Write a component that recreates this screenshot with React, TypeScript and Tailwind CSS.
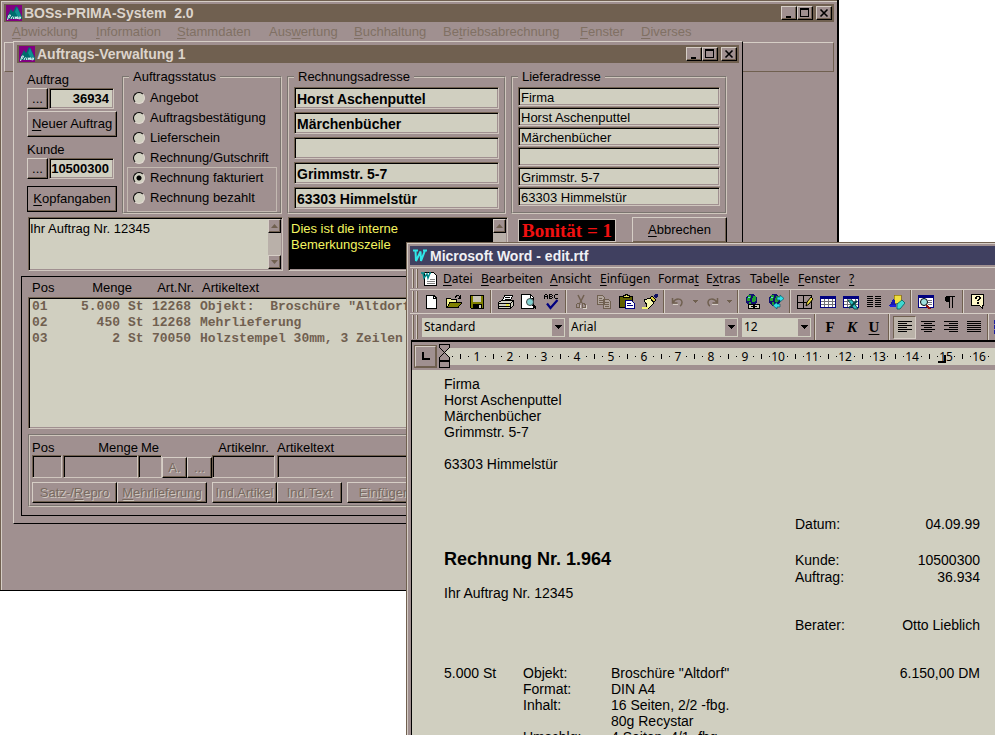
import type { ReactNode } from "react";

const SANS = "font-['Liberation_Sans',Arial,sans-serif]";
const UI = "font-['Noto_Sans',Tahoma,sans-serif]";

const RAISED =
  "border border-t-[#d6cec6] border-l-[#d6cec6] border-b-black border-r-black bg-[#a09090] shadow-[inset_-1px_-1px_0_#706050]";
const SUNKEN =
  "border border-t-[#706050] border-l-[#706050] border-b-[#cfc6be] border-r-[#cfc6be] shadow-[inset_1px_1px_0_#000,inset_-1px_-1px_0_#a09090]";
const GROOVE = "border-2 border-[#cfc6bc] [border-style:groove]";
const EMBOSS = "text-[#786a60] [text-shadow:1px_1px_0_#d0c8c0]";

/* Label text with its keyboard mnemonic underlined */
function Mn({ t, i = 0 }: { t: string; i?: number }) {
  return (
    <span className="whitespace-pre">
      {t.slice(0, i)}
      <span className="underline underline-offset-2">{t[i]}</span>
      {t.slice(i + 1)}
    </span>
  );
}

function PrimaLogo() {
  return (
    <svg width="16" height="16" viewBox="0 0 16 16" className="shrink-0" aria-hidden="true">
      <rect width="16" height="16" fill="#800080" />
      <path d="M1 12 5 4l2 3 3-6 2 2 4 9v2H1z" fill="#006c6c" />
      <path d="M9 7l2-5 4 9-3 1z" fill="#109090" />
      <path d="M1.500 15l1.500-5h1.500l-1 2.500H3M5 14l.8-2 1-.4M8 11.600 7.300 14M9 14l.7-2.200.9.200-.6 2M11 12l.9-.2-.6 2.200M14.500 12h-1.300l-.6 1.800h1.600l.6-2" fill="none" stroke="#f0ffff" strokeWidth=".9" />
    </svg>
  );
}

function WindowButtons() {
  const b = `${RAISED} flex h-[14px] w-4 items-center justify-center`;
  return (
    <div className="ml-auto flex items-center">
      <button className={b} aria-label="Minimieren">
        <svg width="10" height="10" viewBox="0 0 10 10" shapeRendering="crispEdges"><path d="M2 8h5v2H2z" /></svg>
      </button>
      <button className={b} aria-label="Maximieren">
        <svg width="10" height="10" viewBox="0 0 10 10" shapeRendering="crispEdges"><path d="M0 0h9v9H0zM1 2v6h7V2z" fillRule="evenodd" /></svg>
      </button>
      <button className={`${b} ml-[3px]`} aria-label="Schließen">
        <svg width="10" height="10" viewBox="0 0 10 10"><path d="M1.500 1.500l7 7M8.500 1.500l-7 7" stroke="#000" strokeWidth="1.600" /></svg>
      </button>
    </div>
  );
}

function ScrollBar() {
  const b = `${RAISED} flex h-[14px] w-[13px] shrink-0 items-center justify-center`;
  return (
    <div className="my-px mr-px flex w-[13px] shrink-0 flex-col justify-between bg-[#b9b0a9]">
      <button className={b} aria-label="Nach oben">
        <svg width="7" height="4" viewBox="0 0 7 4"><path d="M0 4 3.500 0 7 4z" fill="#706050" /></svg>
      </button>
      <button className={b} aria-label="Nach unten">
        <svg width="7" height="4" viewBox="0 0 7 4"><path d="M0 0h7L3.500 4z" fill="#706050" /></svg>
      </button>
    </div>
  );
}

function Status({ label, checked = false }: { label: string; checked?: boolean }) {
  return (
    <label className="flex h-5 items-center gap-[5px] pl-[5px]">
      <input
        type="radio"
        name="status"
        defaultChecked={checked}
        className="h-3 w-3 shrink-0 appearance-none rounded-full border border-t-black border-l-black border-b-[#e0d8d0] border-r-[#e0d8d0] bg-[#d0cfc0] checked:bg-[radial-gradient(circle,#000_2px,#d0cfc0_3px)]"
      />
      <span className="whitespace-nowrap">{label}</span>
    </label>
  );
}

function NumberPick({ id, label, value }: { id: string; label: string; value: string }) {
  return (
    <div>
      <label htmlFor={id} className="block h-4 leading-[15px]">{label}</label>
      <div className="flex h-[21px] gap-px">
        <button className={`${RAISED} w-[21px] leading-[14px]`}>...</button>
        <input id={id} defaultValue={value} className={`${SUNKEN} w-[65px] bg-[#d0cfc0] pr-1 text-right font-bold`} />
      </div>
    </div>
  );
}

function AddressBox({ title, lines, big = false }: { title: string; lines: string[]; big?: boolean }) {
  return (
    <fieldset className={`${GROOVE} h-[145px] px-[5px] ${big ? "w-[219px]" : "w-[216px]"}`}>
      <legend className="px-1 leading-4">{title}</legend>
      <div className={`flex flex-col pt-[2px] ${big ? "gap-[3px]" : "gap-px"}`}>
        {lines.map((l, n) => (
          <input
            key={n}
            aria-label={`${title} Zeile ${n + 1}`}
            defaultValue={l}
            className={`${SUNKEN} w-full bg-[#d0cfc0] pt-px pl-[2px] ${big ? "h-[22px] text-[14px] font-bold" : "h-[19px]"}`}
          />
        ))}
      </div>
    </fieldset>
  );
}

const positions = [
  ["01", "5.000", "St", "12268", 'Objekt:  Broschüre "Altdorf"'],
  ["02", "450", "St", "12268", "Mehrlieferung"],
  ["03", "2", "St", "70050", "Holzstempel 30mm, 3 Zeilen"],
];

function EntryField({ label, width, align = "" }: { label: string; width: string; align?: string }) {
  return (
    <label className={`flex flex-col ${width} ${align}`}>
      <span className="h-[15px] leading-[15px] whitespace-nowrap">{label}</span>
      <input className={`${SUNKEN} h-[23px] w-full bg-[#a09090]`} />
    </label>
  );
}

function OrderWindow() {
  const disabled = `${RAISED} ${EMBOSS} h-[21px] whitespace-nowrap`;
  return (
    <section className="absolute top-[41px] left-[13px] flex h-[483px] w-[730px] flex-col border border-t-[#d6cec6] border-r-black border-b-black border-l-[#d6cec6] bg-[#a09090] p-[3px]">
      <header className="flex h-[18px] shrink-0 items-center gap-[2px] bg-[#706050] pr-[2px] pl-[2px] text-[14px] font-bold text-[#dcd4cc]">
        <PrimaLogo />
        <h2>Auftrags-Verwaltung 1</h2>
        <WindowButtons />
      </header>

      <div className="flex gap-[5px] pt-[6px] pl-[10px]">
        <div className="flex w-[90px] flex-col pt-[3px]">
          <NumberPick id="auftrag" label="Auftrag" value="36934" />
          <button className={`${RAISED} mt-[2px] h-[26px] whitespace-nowrap`}><Mn t="Neuer Auftrag" /></button>
          <div className="mt-[5px]"><NumberPick id="kunde" label="Kunde" value="10500300" /></div>
          <button className={`${RAISED} mt-[7px] h-[26px] whitespace-nowrap outline-1 -outline-offset-1 outline-black`}>
            <Mn t="Kopfangaben" />
          </button>
        </div>
        <fieldset className={`${GROOVE} h-[145px] w-[160px] px-1`}>
          <legend className="ml-px px-1 leading-4">Auftragsstatus</legend>
          <div className="pt-[3px]">
            <Status label="Angebot" />
            <Status label="Auftragsbestätigung" />
            <Status label="Lieferschein" />
            <Status label="Rechnung/Gutschrift" />
            <div className="pb-[3px] ring-1 ring-[#c4bab2]">
              <Status label="Rechnung fakturiert" checked />
              <Status label="Rechnung bezahlt" />
            </div>
          </div>
        </fieldset>
        <AddressBox
          big
          title="Rechnungsadresse"
          lines={["Horst Aschenputtel", "Märchenbücher", "", "Grimmstr. 5-7", "63303 Himmelstür"]}
        />
        <AddressBox
          title="Lieferadresse"
          lines={["Firma", "Horst Aschenputtel", "Märchenbücher", "", "Grimmstr. 5-7", "63303 Himmelstür"]}
        />
      </div>

      <div className="flex gap-[5px] pt-[3px] pl-[11px]">
        <div className={`${SUNKEN} flex h-[54px] w-[255px] bg-[#d0cfc0]`}>
          <textarea aria-label="Auftragstext" defaultValue="Ihr Auftrag Nr. 12345" className="min-w-0 flex-1 resize-none pt-[3px] pl-px leading-4 outline-none" />
          <ScrollBar />
        </div>
        <div className={`${SUNKEN} flex h-[54px] w-[220px] bg-black`}>
          <textarea
            aria-label="Interne Bemerkung"
            defaultValue={"Dies ist die interne\nBemerkungszeile"}
            className="min-w-0 flex-1 resize-none overflow-hidden pt-[3px] pl-[2px] leading-4 text-[#f4f460] outline-none"
          />
          <ScrollBar />
        </div>
        <output className="mt-[2px] ml-[5px] h-[23px] w-[98px] overflow-hidden border border-[#cfc6be] bg-black text-center font-['Liberation_Serif','Times_New_Roman',serif] text-[19px] leading-[22px] font-bold whitespace-nowrap text-[#f01010]">
          Bonität = 1
        </output>
        <button className={`${RAISED} ml-[11px] h-[26px] w-[95px]`}><Mn t="Abbrechen" /></button>
      </div>

      <div className="mx-1 mt-[5px] mb-1 flex-1 border border-black px-[6px] pt-[3px]">
        <table className="block">
          <thead className="block">
            <tr className="grid h-[17px] grid-cols-[50px_50px_62px_1fr] pl-1 leading-4">
              <th className="text-left font-normal">Pos</th>
              <th className="text-right font-normal">Menge</th>
              <th className="text-right font-normal">Art.Nr.</th>
              <th className="pl-2 text-left font-normal">Artikeltext</th>
            </tr>
          </thead>
          <tbody className={`${SUNKEN} block h-[132px] bg-[#d0cfc0] pt-px font-['Liberation_Mono','Courier_New',monospace] font-bold text-[#706050]`}>
            {positions.map((p) => (
              <tr key={p[0]} className="grid h-4 grid-cols-[48px_40px_32px_48px_1fr] pl-[3px] leading-4 whitespace-pre">
                <td>{p[0]}</td>
                <td className="text-right">{p[1]}</td>
                <td className="pl-2">{p[2]}</td>
                <td>{p[3]}</td>
                <td>{p[4]}</td>
              </tr>
            ))}
          </tbody>
        </table>
        <div className={`${GROOVE} mt-[5px] h-[73px] px-[2px] pt-1`}>
          <div className="flex items-end">
            <EntryField label="Pos" width="w-[30px]" />
            <EntryField label="Menge" width="ml-px w-[75px]" align="text-right" />
            <EntryField label="Me" width="w-[24px]" align="text-center" />
            <button disabled className={`${disabled} w-[25px]`}>A.</button>
            <button disabled className={`${disabled} w-[25px]`}>...</button>
            <EntryField label="Artikelnr." width="w-[63px]" align="text-center" />
            <EntryField label="Artikeltext" width="ml-[2px] flex-1" />
          </div>
          <div className="mt-1 flex">
            <button disabled className={`${disabled} w-[85px]`}><Mn t="Satz-/Repro" i={6} /></button>
            <button disabled className={`${disabled} w-[90px]`}><Mn t="Mehrlieferung" /></button>
            <button disabled className={`${disabled} ml-[5px] w-[65px]`}>Ind.Artikel</button>
            <button disabled className={`${disabled} w-[65px]`}>Ind.Text</button>
            <button disabled className={`${disabled} ml-[5px] w-[75px]`}><Mn t="Einfügen" i={3} /></button>
          </div>
        </div>
      </div>
    </section>
  );
}

function MainWindow() {
  return (
    <main className="absolute top-0 left-0 flex h-[591px] w-[839px] flex-col border-r-2 border-b border-r-black border-b-black bg-[#a09090] p-1 pr-[3px] shadow-[inset_1px_1px_0_#706050,inset_2px_2px_0_#d6cec6]">
      <header className="flex h-[18px] shrink-0 items-center gap-[2px] bg-[#706050] pr-[2px] pl-[2px] text-[14px] font-bold text-[#dcd4cc]">
        <PrimaLogo />
        <h1 className="whitespace-pre">BOSs-PRIMA-System  2.0</h1>
        <WindowButtons />
      </header>
      <nav className="grid h-[20px] grid-cols-[84px_81px_92px_85px_89px_137px_61px_60px] items-center pl-2 text-[#807064]">
        <button className="text-left"><Mn t="Abwicklung" /></button>
        <button className="text-left"><Mn t="Information" /></button>
        <button className="text-left"><Mn t="Stammdaten" /></button>
        <button className="text-left"><Mn t="Auswertung" i={3} /></button>
        <button className="text-left"><Mn t="Buchhaltung" /></button>
        <button className="text-left"><Mn t="Betriebsabrechnung" i={2} /></button>
        <button className="text-left"><Mn t="Fenster" /></button>
        <button className="text-left"><Mn t="Diverses" /></button>
      </nav>
      <div className="h-[30px] border border-t-[#d6cec6] border-r-[#706050] border-b-[#706050] border-l-[#d6cec6]" />
    </main>
  );
}

function Grip() {
  return (
    <span className="flex h-full w-[7px] shrink-0 gap-[2px] py-px">
      <span className="w-[2px] border-l border-l-[#d6cec6] bg-[#706050]" />
      <span className="w-[2px] border-l border-l-[#d6cec6] bg-[#706050]" />
    </span>
  );
}

function Sep({ width = "w-[6px]" }: { width?: string }) {
  return (
    <span className={`flex h-full shrink-0 justify-center ${width}`}>
      <span className="w-[2px] border-l border-l-[#706050] bg-[#d6cec6]" />
    </span>
  );
}

function Tool({ label, children, width = "w-[23px]" }: { label: string; children: ReactNode; width?: string }) {
  return (
    <button aria-label={label} className={`flex h-full shrink-0 items-center justify-center ${width}`}>
      <svg width="16" height="16" viewBox="0 0 16 16" shapeRendering="crispEdges" fill="none">
        {children}
      </svg>
    </button>
  );
}

function DropArrow({ label }: { label: string }) {
  return (
    <button aria-label={label} className="flex h-full w-3 shrink-0 items-center justify-center">
      <svg width="5" height="3" viewBox="0 0 5 3" shapeRendering="crispEdges"><path d="M0 0h5v1H4v1H3v1H2V2H1V1H0z" fill="#706050" /></svg>
    </button>
  );
}

const globe = (
  <>
    <circle cx="6.500" cy="6" r="6" fill="#101070" />
    <path d="M3 1h3v3H5v3H2V4h1zM8 2h3v4L9 8H7V6zM4 8h2v3H4z" fill="#20a030" />
    <path d="M3 3h2v1H3z" fill="#60e0e0" />
  </>
);
const grid = (
  <>
    <path d="M0 2h16v12H0z" fill="#fff" />
    <path d="M0 2h16v3H0z" fill="#000080" />
    <path d="M.5 4v9.500h15V4" stroke="#000080" />
    <path d="M1 7.500h14M1 10.500h14M4.500 5v8M8.500 5v8M12.500 5v8" stroke="#707078" />
  </>
);

function StandardBar() {
  return (
    <div className="flex h-[24px] shrink-0 items-center border-t border-t-[#d6cec6] pl-[2px]">
      <Grip />
      <Tool label="Neu">
        <path d="M3 1h8v1H4v12h9V4h1v11H3z" fill="#000" />
        <path d="M4 2h7v3h2v9H4z" fill="#fff" />
        <path d="M10 1h1l3 3v1h-4z" fill="#000" />
        <path d="M11 3h1v1h-1z" fill="#fff" />
      </Tool>
      <Tool label="Öffnen">
        <path d="M.5 13.500v-9h4l1 1h5v3" fill="#f4f490" stroke="#000" />
        <path d="M1 13.500l3-5h12l-4 5z" fill="#808000" stroke="#000" />
        <path d="M9 3.500c2-3 4-2 5 0M14.500 1v3h-3" stroke="#000" />
      </Tool>
      <Tool label="Speichern">
        <path d="M1.500 1.500h13v13h-12l-1-1z" fill="#808000" stroke="#000" />
        <path d="M4 2h8v6H4z" fill="#c8c4b8" />
        <path d="M4 10h9v5H4z" fill="#000" />
        <path d="M10 11h2v3h-2z" fill="#d0cfc0" />
      </Tool>
      <Sep />
      <Tool label="Drucken">
        <path d="M4.500 6.500l2-5h8l-2 5z" fill="#fff" stroke="#000" />
        <path d="M7 3.500h5M6.500 5.500h5" stroke="#000" />
        <path d="M.5 8.500l3-2h12v5l-3 3H.5z" fill="#d0cfc0" stroke="#000" />
        <path d="M1 9.500h12M1 12.500h12M13 9l2-2M12.500 9v5" stroke="#000" />
        <path d="M8 10h3v2H8z" fill="#e8e840" />
      </Tool>
      <Tool label="Seitenansicht">
        <path d="M.5.500h9l3 3v11H.5z" fill="#fff" stroke="#000" />
        <path d="M9.500 1v3h3" stroke="#000" />
        <circle cx="9" cy="8" r="3.500" fill="#80d0d0" stroke="#404848" shapeRendering="auto" />
        <path d="M12 11l3 3.500" stroke="#000" strokeWidth="2" />
      </Tool>
      <Tool label="Rechtschreibung">
        <path d="M1 0h2v1H1zM0 1h1v4H0zM3 1h1v4H3zM1 2h2v1H1zM5 0h1v5H5zM6 0h2v1H6zM6 2h2v1H6zM6 4h2v1H6zM8 1h1v1H8zM8 3h1v1H8zM11 0h3v1h-3zM10 1h1v3h-1zM11 4h3v1h-3z" fill="#000" />
        <path d="M3 9.500l3.500 4.500 7-8" stroke="#000080" strokeWidth="2.200" shapeRendering="auto" />
      </Tool>
      <Sep />
      <Tool label="Ausschneiden">
        <path d="M5 1l4 8M11 1L7 9" stroke="#706050" strokeWidth="1.500" shapeRendering="auto" />
        <path d="M4.500 9.500h2v4h-3v-3zM9.500 9.500h2l1 2v2h-3z" stroke="#706050" />
        <path d="M7.500 14v-3M13.500 11v3.500h-4" stroke="#d6cec6" />
      </Tool>
      <Tool label="Kopieren">
        <path d="M1.500 1.500h5l2 2v7h-7zM7.500 5.500h5l2 2v7h-7z" fill="#b0a49c" stroke="#706050" />
        <path d="M3 4.500h3M3 6.500h4M3 8.500h4M9 8.500h4M9 10.500h4M9 12.500h4" stroke="#706050" />
      </Tool>
      <Tool label="Einfügen">
        <path d="M.5 2.500h13v11H.5z" fill="#606000" stroke="#000" />
        <path d="M4 3.500h6v-2H8v-1H6v1H4z" fill="#e8e060" stroke="#000" />
        <path d="M6.500 6.500h6l3 3v5h-9z" fill="#fff" stroke="#000080" />
        <path d="M8 9.500h4M8 11.500h6" stroke="#000080" />
      </Tool>
      <Tool label="Format übertragen">
        <path d="M2 6l6-2 4 5-5 5H4l1-3z" fill="#f8f8b0" stroke="#000" />
        <path d="M8 4l2-2 4 4-2 2z" fill="#e0d040" stroke="#000" />
        <path d="M12.500 3.500L15.500.5" stroke="#101060" strokeWidth="3" />
        <path d="M0 14h6" stroke="#f4f470" strokeWidth="2" />
      </Tool>
      <Sep />
      <Tool label="Rückgängig" width="w-[22px]">
        <path d="M2.500 4v5h5M3 8.500c3-5 9-4 9 0 0 2-1 3-2 3.500" stroke="#706050" strokeWidth="1.500" shapeRendering="auto" />
        <path d="M3 10h5" stroke="#d6cec6" />
      </Tool>
      <DropArrow label="Rückgängig-Liste" />
      <Tool label="Wiederherstellen" width="w-[22px]">
        <path d="M13.500 4v5h-5M13 8.500c-3-5-9-4-9 0 0 2 1 3 2 3.500" stroke="#706050" strokeWidth="1.500" shapeRendering="auto" />
        <path d="M8 10h6" stroke="#d6cec6" />
      </Tool>
      <DropArrow label="Wiederherstellen-Liste" />
      <Sep />
      <Tool label="Hyperlink">
        {globe}
        <path d="M3 10.500h5v4H3zM9.500 10.500h5v4h-5zM6 12.500h6" stroke="#000" fill="#d0cfc0" />
      </Tool>
      <Tool label="Web">
        {globe}
        <path d="M9 3h3V1l4 3.500L12 8V6H9zM12 10H9V8l-4 3.500L9 15v-2h3z" fill="#30e0e8" stroke="#004858" strokeWidth=".6" shapeRendering="auto" />
      </Tool>
      <Sep />
      <Tool label="Tabellen und Rahmen">
        <path d="M.5 1.500h14v13H.5zM6.500 2v12M1 8.500h9" stroke="#000" />
        <path d="M9 12l1-4 4-5 2 2-4 5z" fill="#e8d840" stroke="#000" shapeRendering="auto" />
      </Tool>
      <Tool label="Tabelle">{grid}</Tool>
      <Tool label="Excel-Tabelle">
        {grid}
        <path d="M5 6h4l6 9h-4z" fill="#30c0c0" stroke="#003030" strokeWidth=".8" shapeRendering="auto" />
        <path d="M14 7l-8 7" stroke="#004848" strokeWidth="2" shapeRendering="auto" />
      </Tool>
      <Tool label="Spalten">
        <path d="M1 2.500h6M1 4.500h6M1 6.500h6M1 8.500h6M1 10.500h6M1 12.500h6M9 2.500h6M9 4.500h6M9 6.500h6M9 8.500h6M9 10.500h6M9 12.500h6" stroke="#000" />
      </Tool>
      <Tool label="Zeichnen">
        <path d="M5 1h7v8H5z" fill="#f0e040" stroke="#806000" strokeWidth=".6" />
        <path d="M0 12l5-8 2 8z" fill="#1818b0" />
        <path d="M1 11h6v2H1z" fill="#2020e0" />
        <path d="M8 10l5-4 3 3-5 6H8z" fill="#40d8d0" stroke="#006060" strokeWidth=".8" shapeRendering="auto" />
      </Tool>
      <Sep />
      <Tool label="Dokumentstruktur">
        <path d="M.5 1.500h15v12H.5z" fill="#fff" stroke="#000080" />
        <path d="M0 1h16v3H0z" fill="#000080" />
        <path d="M10 6.500h4M10 8.500h4M10 10.500h4" stroke="#707080" />
        <circle cx="6" cy="8" r="3.500" fill="#a0e0e0" stroke="#000" shapeRendering="auto" />
        <path d="M8.500 11l3.500 4" stroke="#901010" strokeWidth="2" />
      </Tool>
      <Tool label="Absatzmarken">
        <path d="M6 2h8v1h-2v11h-1V3H9v11H8V8H6L4 7V3z" fill="#000" />
      </Tool>
      <Sep />
      <Tool label="Hilfe">
        <path d="M1.500.500h12v11h-1v3l-3-3h-8z" fill="#fff8c8" stroke="#000" />
        <path d="M5 3h1V2h4v1h1v2h-1v1H9v1H7V6h1V5h1V3H7v2H5zM7 8h2v2H7z" fill="#000" />
      </Tool>
    </div>
  );
}

function Combo({ label, value, width }: { label: string; value: string; width: string }) {
  return (
    <label className={`relative block h-[19px] shrink-0 bg-[#d0cfc0] ${width}`}>
      <select aria-label={label} defaultValue={value} className="h-full w-full appearance-none pl-[2px] text-[12px] leading-[18px] outline-none">
        <option>{value}</option>
      </select>
      <span className="pointer-events-none absolute top-px right-px bottom-px flex w-3 items-center justify-center bg-[#a09090]">
        <svg width="7" height="4" viewBox="0 0 7 4" shapeRendering="crispEdges"><path d="M0 0h7v1H6v1H5v1H4v1H3V3H2V2H1V1H0z" /></svg>
      </span>
    </label>
  );
}

function FormatBar() {
  const letter = "w-[22px] shrink-0 font-['Liberation_Serif','Times_New_Roman',serif] text-[15px] leading-5 font-bold";
  return (
    <div className="flex h-[27px] shrink-0 items-center border-t border-t-[#d6cec6] pl-[2px]">
      <Grip />
      <div className="flex shrink-0 gap-1 pl-[3px]">
        <Combo label="Formatvorlage" value="Standard" width="w-[143px]" />
        <Combo label="Schriftart" value="Arial" width="w-[169px]" />
        <Combo label="Schriftgrad" value="12" width="w-[69px]" />
      </div>
      <Sep width="w-[8px]" />
      <button className={letter}>F</button>
      <button className={`${letter} italic`}>K</button>
      <button className={`${letter} underline underline-offset-2`}>U</button>
      <Sep width="w-[8px]" />
      <span className="flex h-[23px] shrink-0 border border-t-[#706050] border-r-[#d6cec6] border-b-[#d6cec6] border-l-[#706050] bg-[#bab2a8]">
        <Tool label="Linksbündig" width="w-[21px]">
          <path d="M1 2.500h14M1 4.500h9M1 6.500h14M1 8.500h9M1 10.500h14M1 12.500h9" stroke="#000" />
        </Tool>
      </span>
      <Tool label="Zentriert">
        <path d="M1 2.500h14M4 4.500h8M1 6.500h14M4 8.500h8M1 10.500h14M4 12.500h8" stroke="#000" />
      </Tool>
      <Tool label="Rechtsbündig">
        <path d="M1 2.500h14M6 4.500h9M1 6.500h14M6 8.500h9M1 10.500h14M6 12.500h9" stroke="#000" />
      </Tool>
      <Tool label="Blocksatz">
        <path d="M1 2.500h14M1 4.500h14M1 6.500h14M1 8.500h14M1 10.500h14M1 12.500h14" stroke="#000" />
      </Tool>
      <Sep width="w-[5px]" />
      <Tool label="Nummerierung">
        <path d="M0 1h2v4H0zM0 6h2v4H0zM0 11h2v4H0z" fill="#2020a0" />
        <path d="M5 3.500h10M5 8.500h10M5 13.500h10" stroke="#000" />
      </Tool>
    </div>
  );
}

function Ruler() {
  const cms = Array.from({ length: 17 }, (_, n) => n + 1);
  return (
    <div className="flex h-[28px] shrink-0 items-center overflow-hidden pl-[3px]">
      <button aria-label="Tabstopp" className="mr-px flex h-[21px] w-[21px] shrink-0 items-center justify-center border border-t-[#d6cec6] border-r-[#706050] border-b-[#706050] border-l-[#d6cec6] shadow-[0_0_0_1px_#706050]">
        <svg width="8" height="8" viewBox="0 0 8 8"><path d="M0 0h2v6h6v2H0z" /></svg>
      </button>
      <svg width="580" height="28" viewBox="0 0 580 28" className="shrink-0" shapeRendering="crispEdges">
        <rect x="7" y="6" width="573" height="17" fill="#d0cfc0" />
        {cms.map((n) => {
          const x = Math.round(n * 33.5) + 6;
          return (
            <g key={n}>
              <path d={`M${x - 25} 14h1v1h-1zM${x - 17} 12h1v5h-1zM${x - 9} 14h1v1h-1z`} />
              {n < 17 && <text x={x} y="19" textAnchor="middle" fontSize="12">{n}</text>}
            </g>
          );
        })}
        <path d="M2.500 2.500h10v3l-5 5-5-5zM7.500 10.500l5 5v3h-10v-3zM2.500 19.500h10v6h-10z" fill="#a09090" stroke="#000" />
        <path d="M507 13h2v8h-8v-2h6z" />
      </svg>
    </div>
  );
}

function Page() {
  return (
    <article className={`${SANS} min-h-0 flex-1 overflow-hidden bg-[#d0cfc0] pt-[6px] pr-[15px] pl-[32px] text-[14px] leading-4`}>
      <address className="not-italic">
        Firma<br />
        Horst Aschenputtel<br />
        Märchenbücher<br />
        Grimmstr. 5-7<br />
        <br />
        63303 Himmelstür
      </address>
      <div className="mt-11 flex justify-between">
        <div className="pt-[33px]">
          <h2 className="text-[18px] leading-5 font-bold">Rechnung Nr. 1.964</h2>
          <p className="mt-4">Ihr Auftrag Nr. 12345</p>
        </div>
        <dl className="grid w-[185px] grid-cols-2 [&>dd]:text-right [&>dd]:whitespace-nowrap">
          <dt className="mb-5">Datum:</dt>
          <dd className="mb-5">04.09.99</dd>
          <dt>Kunde:</dt>
          <dd>10500300</dd>
          <dt className="mt-px">Auftrag:</dt>
          <dd className="mt-px">36.934</dd>
          <dt className="mt-8">Berater:</dt>
          <dd className="mt-8">Otto Lieblich</dd>
        </dl>
      </div>
      <table className="mt-8 w-full table-fixed">
        <colgroup>
          <col className="w-[79px]" />
          <col className="w-[88px]" />
          <col />
          <col className="w-[120px]" />
        </colgroup>
        <tbody>
          <tr><td>5.000 St</td><td>Objekt:</td><td>Broschüre "Altdorf"</td><td className="text-right">6.150,00 DM</td></tr>
          <tr><td /><td>Format:</td><td>DIN A4</td><td /></tr>
          <tr><td /><td>Inhalt:</td><td>16 Seiten, 2/2 -fbg.</td><td /></tr>
          <tr><td /><td /><td>80g Recystar</td><td /></tr>
          <tr><td /><td>Umschlg:</td><td>4 Seiten, 4/1 -fbg.</td><td /></tr>
        </tbody>
      </table>
    </article>
  );
}

function WordWindow() {
  return (
    <section className={`${UI} absolute top-[242px] right-0 bottom-0 left-[406px] flex flex-col overflow-hidden border-t border-l border-[#706050] bg-[#a09090] pt-[3px] pl-[3px] text-[12px] shadow-[inset_1px_1px_0_#d6cec6]`}>
      <header className={`${SANS} flex h-[19px] shrink-0 items-center gap-[3px] bg-[#404060] pl-[2px] text-[14px] font-bold text-[#f0f0f4]`}>
        <svg width="15" height="14" viewBox="0 0 15 14" aria-hidden="true">
          <path d="M1 1.500h5M3.500 1.500 4 12l4.500-9.500L9 12l4-10.500M11 1.500h4" fill="none" stroke="#30e8e8" strokeWidth="2" />
        </svg>
        <h1>Microsoft Word - edit.rtf</h1>
      </header>
      <nav className="mt-[2px] flex h-[22px] shrink-0 items-center border-t border-t-[#d6cec6] pl-[2px]">
        <Grip />
        <svg width="17" height="16" viewBox="0 0 17 16" shapeRendering="crispEdges" className="mr-[5px] ml-[2px] shrink-0" aria-hidden="true">
          <path d="M3.500 1.500h9l3 3v10h-12z" fill="#fff" stroke="#000" />
          <path d="M9 8.500h5M6 10.500h8M6 12.500h8" stroke="#808080" />
          <path d="M0 2h4M2 2l1 5 3-4 1 4 2-5M8 2h2" fill="none" stroke="#008888" strokeWidth="1.500" shapeRendering="auto" />
        </svg>
        <div className="grid grid-cols-[38px_69px_50px_58px_48px_44px_48px_51px_20px] [&>button]:text-left">
          <button><Mn t="Datei" /></button>
          <button><Mn t="Bearbeiten" /></button>
          <button><Mn t="Ansicht" /></button>
          <button><Mn t="Einfügen" /></button>
          <button><Mn t="Format" i={5} /></button>
          <button><Mn t="Extras" i={1} /></button>
          <button><Mn t="Tabelle" i={5} /></button>
          <button><Mn t="Fenster" /></button>
          <button><Mn t="?" /></button>
        </div>
      </nav>
      <StandardBar />
      <FormatBar />
      <div className="ml-px flex min-h-0 flex-1 flex-col border-t-2 border-l border-black">
        <Ruler />
        <Page />
      </div>
    </section>
  );
}

export default function App() {
  return (
    <div className={`${SANS} relative h-screen overflow-hidden bg-white text-[13px] leading-4 text-black`}>
      <MainWindow />
      <OrderWindow />
      <WordWindow />
    </div>
  );
}
